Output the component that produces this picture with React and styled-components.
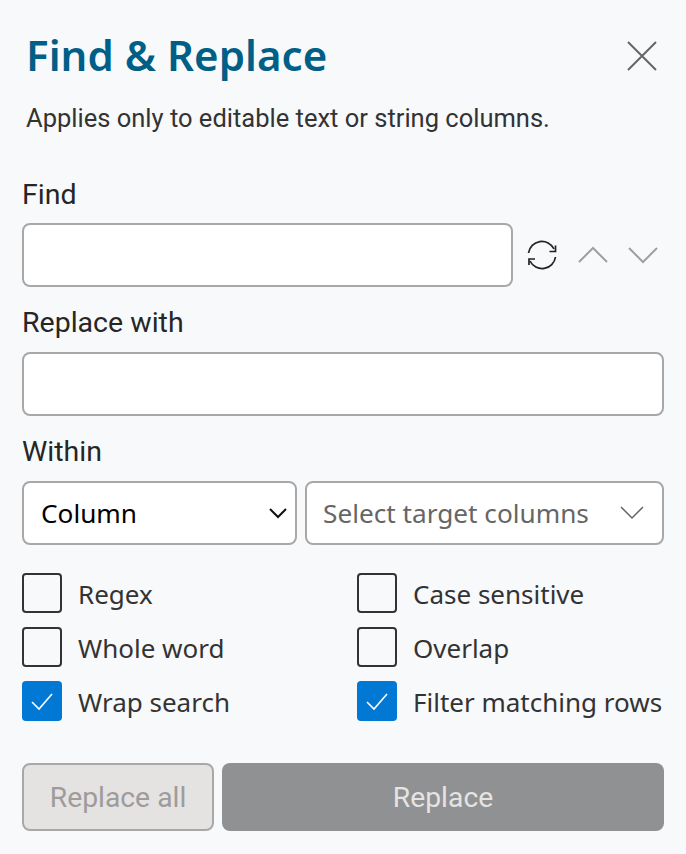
import React from 'react'
import styled, { createGlobalStyle } from 'styled-components'

const GlobalStyle = createGlobalStyle`
  html, body { margin: 0; padding: 0; background: #f8f9fb; }
  * { box-sizing: border-box; }
`

const Panel = styled.div`
  width: 686px;
  height: 854px;
  padding: 32px 22px 0;
  background: #f8f9fb;
  font-family: "Noto Sans", sans-serif;
  overflow: hidden;
`
const Header = styled.div`
  display: flex;
  align-items: center;
  justify-content: space-between;
  height: 48px;
  padding: 0 7px 0 4px;
`
const Title = styled.h1`
  margin: 0;
  padding-bottom: 3px;
  font-family: "Noto Sans", sans-serif;
  font-size: 42px;
  line-height: 45px;
  font-weight: 600;
  letter-spacing: 0.05px;
  color: #005f87;
`
const IconButton = styled.button`
  display: flex;
  padding: 0;
  border: 0;
  background: none;
`
const Subtitle = styled.p`
  margin: 20px 0 0 4px;
  font-family: Roboto, sans-serif;
  font-size: 25.5px;
  line-height: 36px;
  color: #333;
`
const Label = styled.label`
  display: block;
  margin-top: ${p => p.$top}px;
  font-family: Roboto, sans-serif;
  font-size: 28.5px;
  line-height: 36px;
  color: #262626;
`
const InputRow = styled.div`
  display: flex;
  align-items: center;
  margin-top: ${p => p.$top}px;
`
const TextInput = styled.input`
  flex: 1;
  min-width: 0;
  height: 64px;
  border: 2px solid #a8a8a8;
  border-radius: 8px;
  background: #fff;
`
const FindTools = styled.div`
  display: flex;
  align-items: center;
  gap: 20.5px;
  width: 151px;
  padding-left: 14px;
`
const SelectRow = styled.div`
  display: grid;
  grid-template-columns: 275px 359px;
  gap: 8px;
  margin-top: 11px;
`
const SelectBox = styled.div`
  display: flex;
  align-items: center;
  justify-content: space-between;
  height: 64px;
  padding: ${p => p.$padding};
  border: 2px solid #a8a8a8;
  border-radius: 8px;
  background: #fff;
  font-size: 26.2px;
  color: ${p => p.$muted ? '#666' : '#000'};
`
const Options = styled.div`
  display: grid;
  grid-template-columns: 335px 1fr;
  row-gap: 14px;
  margin-top: 28px;
`
const Option = styled.div`
  display: flex;
  align-items: center;
  gap: 16px;
  height: 40px;
  white-space: nowrap;
  color: #333;
`
const OptionText = styled.span`
  margin-top: 2px;
  font-size: 26px;
  line-height: 36px;
`
const Check = styled.span`
  display: flex;
  align-items: center;
  justify-content: center;
  width: 40px;
  height: 40px;
  flex: none;
  border: ${p => p.$on ? '0' : '2px solid #333'};
  border-radius: 4px;
  background: ${p => p.$on ? '#0078d4' : 'transparent'};
`
const Actions = styled.div`
  display: grid;
  grid-template-columns: 192px 1fr;
  gap: 8px;
  margin-top: 42px;
`
const ActionButton = styled.button`
  height: 68px;
  padding: 0;
  border: ${p => p.$primary ? '0' : '2px solid #a8a8a8'};
  border-radius: 8px;
  background: ${p => p.$primary ? '#909192' : '#e5e2e2'};
  font-family: Roboto, sans-serif;
  font-size: 28.3px;
  color: ${p => p.$primary ? '#e4e4e4' : '#9e9c9a'};
`

const Line = ({ size, color, d, width = 2 }) => (
  <svg width={size} height={size} viewBox={`0 0 ${size} ${size}`} fill="none" stroke={color} strokeWidth={width}>
    <path d={d} />
  </svg>
)

const SyncIcon = () => (
  <svg width="30" height="30" viewBox="0 0 30 30" fill="none" stroke="#222" strokeWidth="1.7">
    <path d="M1.500 13A13.500 13.500 0 0 1 27 9" />
    <path d="M28.500 5.500v6h-6" />
    <path d="M28.500 17A13.500 13.500 0 0 1 3 21" />
    <path d="M2 25v-6h6" />
  </svg>
)

const options = [
  ['Regex', false], ['Case sensitive', false],
  ['Whole word', false], ['Overlap', false],
  ['Wrap search', true], ['Filter matching rows', true],
]

export default function App() {
  return (
    <Panel>
      <GlobalStyle />
      <Header>
        <Title>Find &amp; Replace</Title>
        <IconButton aria-label="Close">
          <Line size={30} color="#666" d="M1 1l28 28M29 1L1 29" />
        </IconButton>
      </Header>
      <Subtitle>Applies only to editable text or string columns.</Subtitle>

      <Label $top={41}>Find</Label>
      <InputRow $top={10}>
        <TextInput />
        <FindTools>
          <SyncIcon />
          <Line size={30} color="#a19f9d" d="M1 22L15 8l14 14" />
          <Line size={30} color="#a19f9d" d="M1 8l14 14L29 8" />
        </FindTools>
      </InputRow>

      <Label $top={18}>Replace with</Label>
      <InputRow $top={11}>
        <TextInput />
      </InputRow>

      <Label $top={18}>Within</Label>
      <SelectRow>
        <SelectBox $padding="0 7px 0 17px">
          Column
          <Line size={20} color="#111" d="M2 6l8 8 8-8" />
        </SelectBox>
        <SelectBox $muted $padding="0 18px 0 16px">
          Select target columns
          <Line size={24} color="#666" width={1.5} d="M1 6l11 11L23 6" />
        </SelectBox>
      </SelectRow>

      <Options>
        {options.map(([text, on]) => (
          <Option key={text}>
            <Check $on={on}>
              {on && <Line size={24} color="#fff" width={1.6} d="M2 13l7 7L22 5" />}
            </Check>
            <OptionText>{text}</OptionText>
          </Option>
        ))}
      </Options>

      <Actions>
        <ActionButton>Replace all</ActionButton>
        <ActionButton $primary>Replace</ActionButton>
      </Actions>
    </Panel>
  )
}
